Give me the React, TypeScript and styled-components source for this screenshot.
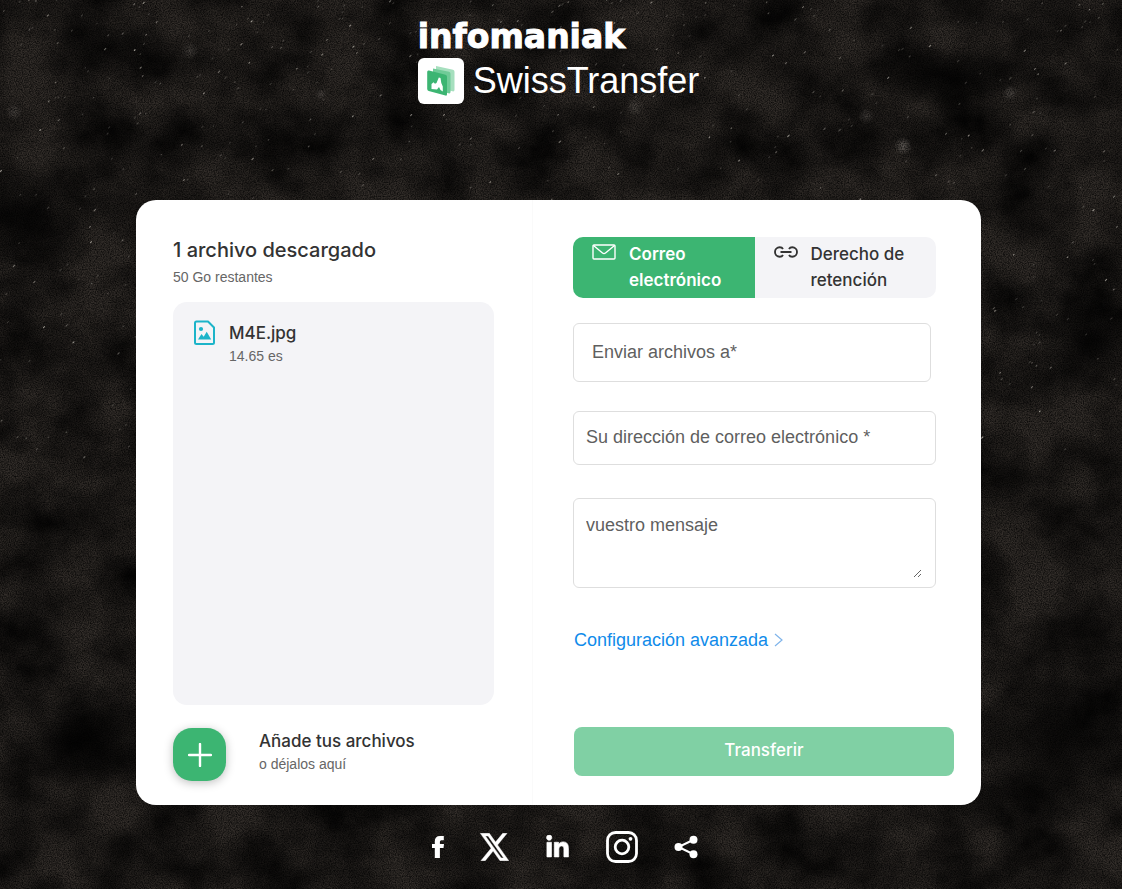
import React from 'react';
import styled, { createGlobalStyle } from 'styled-components';
import { FaLinkedinIn } from 'react-icons/fa6';

const medium = 'Inter, "Liberation Sans", Arial, sans-serif';
const regular = '"Liberation Sans", Arial, sans-serif';

const Global = createGlobalStyle`
  *, *::before, *::after { box-sizing: border-box; }
  body { margin: 0; background: #1a1613; font-family: ${medium}; color: #333; }
  button, input, textarea { font-family: inherit; }
`;

const Page = styled.div`
  position: relative;
  min-height: 100vh;
  display: flex;
  flex-direction: column;
  align-items: center;
  padding: 20px 5px 24px 0;
  overflow: hidden;
`;

const Sky = styled.svg`
  position: absolute;
  inset: 0;
  width: 100%;
  height: 100%;
`;

const Header = styled.header`
  position: relative;
  display: flex;
  flex-direction: column;
  align-items: flex-start;
  min-height: 180px;
  color: #fff;
`;

const Maker = styled.a`
  color: #fff;
  text-decoration: none;
  font: 700 33px/34px "DejaVu Sans", Verdana, sans-serif;
  -webkit-text-stroke: 1px #fff;
`;

const Product = styled.h1`
  margin: 4px 0 0;
  display: flex;
  align-items: center;
  gap: 9px;
  font: 400 36px/46px ${regular};
`;

const Card = styled.main`
  position: relative;
  width: 100%;
  max-width: 845px;
  min-height: 605px;
  display: grid;
  grid-template-columns: minmax(0, 397fr) minmax(0, 448fr);
  background: #fff;
  border-radius: 20px;
`;

const Files = styled.section`
  display: flex;
  flex-direction: column;
  padding: 37px 38px 24px 37px;
  border-right: 1px solid #fafafa;
`;

const Title = styled.h2`
  margin: 0;
  font-size: 20px;
  line-height: 26px;
  font-weight: 500;
`;

const Muted = styled.span`
  font-family: ${regular};
  font-size: 14px;
  line-height: 20px;
  color: #666;
`;

const Quota = styled(Muted)`
  margin: 4px 0 15px;
`;

const FileList = styled.ul`
  flex: 1;
  margin: 0;
  padding: 18px 20px;
  list-style: none;
  background: #f4f4f7;
  border-radius: 14px;
`;

const FileRow = styled.li`
  display: flex;
  gap: 13px;
`;

const Stack = styled.div`
  display: flex;
  flex-direction: column;
`;

const Strong = styled.span`
  font-size: 17px;
  line-height: 26px;
  font-weight: 500;
`;

const AddRow = styled.div`
  display: flex;
  gap: 33px;
  margin-top: 23px;
`;

const AddButton = styled.button`
  width: 53px;
  height: 53px;
  padding: 0;
  display: grid;
  place-items: center;
  border: 0;
  border-radius: 19px;
  background: #3cb572;
  box-shadow: 0 2px 10px rgba(0, 0, 0, 0.25);
`;

const Form = styled.form`
  display: flex;
  flex-direction: column;
  padding: 37px 27px 29px 40px;
`;

const Fields = styled.div`
  display: flex;
  flex-direction: column;
  margin-right: 18px;
`;

const Tabs = styled.div`
  display: grid;
  grid-template-columns: 1fr 1fr;
  border-radius: 10px;
  overflow: hidden;
`;

const Tab = styled.button<{ $active?: boolean }>`
  display: flex;
  align-items: flex-start;
  gap: 13px;
  min-height: 61px;
  padding: 4px 19px;
  border: 0;
  text-align: left;
  font-size: 17px;
  line-height: 26px;
  font-weight: ${p => (p.$active ? 600 : 500)};
  color: ${p => (p.$active ? '#fff' : '#333')};
  background: ${p => (p.$active ? '#3cb572' : '#f4f4f7')};
  svg { flex: none; }
`;

const Input = styled.input<{ $tall?: boolean }>`
  width: auto;
  min-width: 0;
  height: ${p => (p.$tall ? 59 : 54)}px;
  margin: ${p => (p.$tall ? '25px 5px 29px 0' : '0 0 33px')};
  padding: ${p => (p.$tall ? '0 18px' : '0 12px 2px')};
  border: 1px solid #dedede;
  border-radius: 6px;
  font-family: ${regular};
  font-size: 18px;
  color: #333;
  background: #fff;
  &::placeholder { color: #5f5f5f; opacity: 1; }
`;

const MessageBox = styled.div`
  display: flex;
  height: 90px;
  padding: 13px 13px 9px 12px;
  border: 1px solid #dedede;
  border-radius: 6px;
`;

const Message = styled.textarea`
  flex: 1;
  padding: 0;
  border: 0;
  outline: 0;
  font-family: ${regular};
  font-size: 18px;
  line-height: 26px;
  color: #333;
  background: #fff;
  &::placeholder { color: #5f5f5f; opacity: 1; }
`;

const Advanced = styled.a`
  display: flex;
  align-items: center;
  gap: 6px;
  margin: 39px 0 auto 1px;
  font-family: ${regular};
  font-size: 18px;
  line-height: 26px;
  color: #0f8bea;
  text-decoration: none;
`;

const Submit = styled.button`
  height: 49px;
  margin-left: 1px;
  padding: 0 0 3px;
  border: 0;
  border-radius: 8px;
  background: #80d0a4;
  color: #fff;
  font-size: 17px;
  font-weight: 500;
`;

const Social = styled.nav`
  position: relative;
  display: flex;
  align-items: center;
  gap: 36px;
  padding-left: 12px;
  margin-top: 26px;
  height: 32px;
  a { display: flex; color: #fff; }
`;

const STARS = (() => {
  let seed = 7331;
  const rnd = () => (seed = (seed * 16807) % 2147483647) / 2147483647;
  return Array.from({ length: 620 }, () => ({
    x: rnd() * 1122,
    y: Math.pow(rnd(), 1.3) * 460,
    s: 0.5 + rnd() * 1,
    o: 0.2 + Math.pow(rnd(), 3) * 0.5,
  }));
})();

const GLOWS = [
  { x: 903, y: 146, r: 9, o: 0.4 },
  { x: 866, y: 116, r: 8, o: 0.2 },
  { x: 1010, y: 93, r: 8, o: 0.25 },
  { x: 190, y: 51, r: 9, o: 0.2 },
  { x: 14, y: 112, r: 9, o: 0.22 },
  { x: 635, y: 107, r: 9, o: 0.2 },
  { x: 321, y: 94, r: 6, o: 0.2 },
];

function Background() {
  return (
    <Sky viewBox="0 0 1122 889" preserveAspectRatio="xMidYMid slice" aria-hidden="true">
      <defs>
        <filter id="cloud" x="0" y="0" width="100%" height="100%">
          <feTurbulence type="fractalNoise" baseFrequency="0.016 0.018" numOctaves="5" seed="11" />
          <feColorMatrix values="0 0 0 0 0 0 0 0 0 0 0 0 0 0 0 0 0 0 1.5 -0.42" />
        </filter>
        <filter id="grain" x="0" y="0" width="100%" height="100%">
          <feTurbulence type="fractalNoise" baseFrequency="0.85" numOctaves="2" seed="3" />
          <feColorMatrix values="0 0 0 0 0 0 0 0 0 0 0 0 0 0 0 0 0 0 1.4 -0.4" />
        </filter>
        <radialGradient id="shade">
          <stop offset="0" stopColor="#000" stopOpacity="0.75" />
          <stop offset="1" stopColor="#000" stopOpacity="0" />
        </radialGradient>
        <radialGradient id="glow">
          <stop offset="0" stopColor="#cfc6be" />
          <stop offset="1" stopColor="#cfc6be" stopOpacity="0" />
        </radialGradient>
      </defs>
      <rect width="1122" height="889" fill="#332e2a" />
      <rect width="1122" height="889" filter="url(#cloud)" />
      <ellipse cx="1060" cy="740" rx="90" ry="90" fill="url(#shade)" />
      <ellipse cx="90" cy="740" rx="90" ry="50" fill="url(#shade)" />
      <ellipse cx="10" cy="215" rx="90" ry="50" fill="url(#shade)" />
      <ellipse cx="1095" cy="340" rx="60" ry="50" fill="url(#shade)" />
      <ellipse cx="105" cy="48" rx="60" ry="25" fill="url(#shade)" />
      <ellipse cx="940" cy="75" rx="90" ry="30" fill="url(#shade)" />
      {GLOWS.map(g => (
        <circle key={g.x} cx={g.x} cy={g.y} r={g.r} fill="url(#glow)" opacity={g.o} />
      ))}
      <rect width="1122" height="889" filter="url(#grain)" />
      {STARS.map((s, i) => (
        <line key={i} x1={s.x} y1={s.y} x2={s.x + s.s} y2={s.y - s.s} stroke="#d8d2c8" strokeOpacity={s.o} strokeWidth="1.1" strokeLinecap="round" />
      ))}
    </Sky>
  );
}

export default function App() {
  return (
    <>
      <Global />
      <Page>
        <Background />
        <Header>
          <Maker href="#infomaniak">infomaniak</Maker>
          <Product>
            <svg width="46" height="46" viewBox="0 0 46 46" aria-hidden="true">
              <rect width="46" height="46" rx="6" fill="#fff" />
              <path d="M18 8l17 3.800q1.500 .4 1.500 2v18q0 2-2 1.500l-16.500-4z" fill="#a6dfbe" />
              <path d="M15 10.500l16 3.300q1.500 .4 1.500 2v18q0 2-2 1.500l-15.500-4z" fill="#6fcb97" />
              <path d="M11 12.500l16.500 4.300q1.500 .4 1.500 2v17.500q0 1.800-1.500 1.300l-16.800-4.500q-1.500-.4-1.500-2v-17.100q0-2 1.800-1.500z" fill="#3cb572" />
              <path d="M13.500 31v-5l2-1.800 1.500 1.500 1.500-.7 2.300-5.500 1.700 .6 .8 5 1.500 3.400v5l-2.300-1.500-1.500-3-2 2.500z" fill="#fff" />
            </svg>
            SwissTransfer
          </Product>
        </Header>
        <Card>
          <Files>
            <Title>1 archivo descargado</Title>
            <Quota>50 Go restantes</Quota>
            <FileList>
              <FileRow>
                <svg width="23" height="26" viewBox="0 0 23 26" fill="none" stroke="#1cb4c9" strokeWidth="2" strokeLinejoin="round" aria-hidden="true">
                  <path d="M3.500 1.500h11.500l6 6v15q0 1.500-1.500 1.500h-16q-1.500 0-1.500-1.500v-19.500q0-1.500 1.500-1.500z" />
                  <circle cx="8" cy="9" r="2.100" fill="#1cb4c9" stroke="none" />
                  <path d="M5 19.500l3.500-5.500 2.200 2.700 3-5 4.500 7.800z" fill="#1cb4c9" stroke="none" />
                </svg>
                <Stack>
                  <Strong>M4E.jpg</Strong>
                  <Muted>14.65 es</Muted>
                </Stack>
              </FileRow>
            </FileList>
            <AddRow>
              <AddButton type="button" aria-label="Añade tus archivos">
                <svg width="24" height="24" viewBox="0 0 24 24" stroke="#fff" strokeWidth="2.400" strokeLinecap="round">
                  <path d="M12 1v22M1 12h22" />
                </svg>
              </AddButton>
              <Stack>
                <Strong>Añade tus archivos</Strong>
                <Muted>o déjalos aquí</Muted>
              </Stack>
            </AddRow>
          </Files>
          <Form>
            <Fields>
              <Tabs>
                <Tab type="button" $active>
                  <svg width="24" height="22" viewBox="0 0 24 22" fill="none" stroke="#fff" strokeWidth="1.400" strokeLinejoin="round" aria-hidden="true">
                    <rect x="1" y="4" width="22" height="14" rx="1" />
                    <path d="M1.500 4.500l9 7.500q1.500 1.200 3 0l9-7.500" />
                  </svg>
                  Correo electrónico
                </Tab>
                <Tab type="button">
                  <svg width="24" height="22" viewBox="0 0 24 22" fill="none" stroke="#333" strokeWidth="1.900" aria-hidden="true">
                    <path d="M9 8Q8 6.300 5.700 6.300a4.700 4.700 0 0 0 0 9.400Q8 15.700 9 14M15 8q1-1.700 3.300-1.700a4.700 4.700 0 0 1 0 9.400Q16 15.700 15 14M6.500 11h11" />
                  </svg>
                  Derecho de retención
                </Tab>
              </Tabs>
              <Input $tall type="email" placeholder="Enviar archivos a*" aria-label="Enviar archivos a" />
              <Input type="email" placeholder="Su dirección de correo electrónico *" aria-label="Su dirección de correo electrónico" />
              <MessageBox>
                <Message placeholder="vuestro mensaje" aria-label="vuestro mensaje" />
              </MessageBox>
            </Fields>
            <Advanced href="#avanzada">
              Configuración avanzada
              <svg width="9" height="14" viewBox="0 0 9 14" fill="none" stroke="#7fb4ea" strokeWidth="1.200" aria-hidden="true">
                <path d="M1 1l7 6-7 6" />
              </svg>
            </Advanced>
            <Submit type="submit">Transferir</Submit>
          </Form>
        </Card>
        <Social aria-label="Redes sociales">
          <a href="#facebook" aria-label="Facebook">
            <svg width="12" height="22" viewBox="0 0 12 22" fill="#fff"><path d="M2.800 22V12H0V8h2.800V5.500Q2.800 0 8 0h3.800v4.200H9.500Q7.900 4.200 7.900 5.700V8H12l-.5 4H7.900v10z" /></svg>
          </a>
          <a href="#x" aria-label="X">
            <svg width="29" height="28" viewBox="1 2 22 20" preserveAspectRatio="none" fill="#fff" stroke="#fff" strokeWidth=".3">
              <path d="M18.244 2.250h3.308l-7.227 8.260 8.502 11.240H16.170l-5.214-6.817L4.990 21.750H1.680l7.730-8.835L1.254 2.250H8.080l4.713 6.231zm-1.161 17.520h1.833L7.084 4.126H5.117z" />
            </svg>
          </a>
          <a href="#linkedin" aria-label="LinkedIn"><FaLinkedinIn size={25} stroke="#fff" strokeWidth={14} /></a>
          <a href="#instagram" aria-label="Instagram">
            <svg width="32" height="32" viewBox="0 0 32 32" fill="none" stroke="#fff" strokeWidth="2.800">
              <rect x="1.500" y="1.500" width="29" height="29" rx="8" />
              <circle cx="16" cy="16" r="6.800" />
              <circle cx="24.500" cy="7.800" r="1.900" fill="#fff" stroke="none" />
            </svg>
          </a>
          <a href="#compartir" aria-label="Compartir">
            <svg width="24" height="24" viewBox="0 0 24 24" fill="#fff" stroke="#fff">
              <path d="M19 5L4.500 12 19 19" fill="none" strokeWidth="2" />
              <g stroke="none"><circle cx="19.500" cy="4.700" r="4" /><circle cx="4.500" cy="12" r="4" /><circle cx="19.500" cy="19.300" r="4" /></g>
            </svg>
          </a>
        </Social>
      </Page>
    </>
  );
}
